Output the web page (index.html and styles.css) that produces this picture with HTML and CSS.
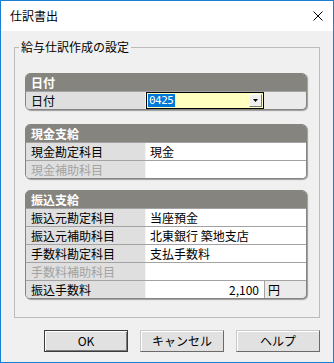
FILE: index.html
```html
<!DOCTYPE html>
<html>
<head>
  <title>仕訳書出</title>
  <link rel="stylesheet" href="styles.css">
</head>
<body>
  <div class="window">
    <div class="titlebar">
      <span class="title">仕訳書出</span>
      <span class="close">
        <svg width="10" height="10" viewBox="0 0 10 10">
          <path d="M0.5 0.5 L9.5 9.5 M9.5 0.5 L0.5 9.5" stroke="#000" stroke-width="1" fill="none"/>
        </svg>
      </span>
    </div>

    <div class="content">
      <fieldset class="group">
        <legend>給与仕訳作成の設定</legend>
        <div class="group-body">

          <div class="panel">
            <div class="panel-head">日付</div>
            <div class="row">
              <div class="label">日付</div>
              <div class="date-field">
                <span class="sel">0425</span>
                <span class="drop">
                  <svg width="5" height="3" viewBox="0 0 5 3"><path d="M0 0 H5 L2.5 3 Z" fill="#000"/></svg>
                </span>
              </div>
              <div class="rest"></div>
            </div>
          </div>

          <div class="panel panel-cash">
            <div class="panel-head">現金支給</div>
            <div class="row">
              <div class="label">現金勘定科目</div>
              <div class="value">現金</div>
            </div>
            <div class="row">
              <div class="label disabled">現金補助科目</div>
              <div class="value"></div>
            </div>
          </div>

          <div class="panel panel-bank">
            <div class="panel-head">振込支給</div>
            <div class="row">
              <div class="label">振込元勘定科目</div>
              <div class="value">当座預金</div>
            </div>
            <div class="row">
              <div class="label">振込元補助科目</div>
              <div class="value">北東銀行 築地支店</div>
            </div>
            <div class="row">
              <div class="label">手数料勘定科目</div>
              <div class="value">支払手数料</div>
            </div>
            <div class="row">
              <div class="label disabled">手数料補助科目</div>
              <div class="value"></div>
            </div>
            <div class="row">
              <div class="label">振込手数料</div>
              <div class="amount">2,100</div>
              <div class="unit">円</div>
            </div>
          </div>

        </div>
      </fieldset>

      <div class="buttons">
        <button type="button" class="btn btn-default">OK</button>
        <button type="button" class="btn">キャンセル</button>
        <button type="button" class="btn">ヘルプ</button>
      </div>
    </div>
  </div>
</body>
</html>
```

FILE: styles.css
```css
* {
  box-sizing: border-box;
}

body {
  margin: 0;
  font-family: "Noto Sans CJK JP", sans-serif;
  font-size: 12px;
  color: #000;
  background-color: #f0f0f0;
}

.window {
  width: 334px;
  height: 363px;
  border: 1px solid #1a7fd4;
  background-color: #f0f0f0;
}

.titlebar {
  display: flex;
  align-items: center;
  height: 30px;
  padding-left: 9px;
  background-color: #fff;
}

.title {
  font-size: 12px;
  line-height: 14px;
}

.close {
  display: flex;
  margin-left: auto;
  margin-right: 10px;
}

.content {
  padding: 8px 13px 0 13px;
}

.group {
  margin: 0;
  padding: 0 12px 18px 4px;
  border: 1px solid #bcbcbc;
}

.group legend {
  padding: 0 2px;
  line-height: 16px;
}

.group-body {
  padding: 18px 0 0 6px;
}

.panel {
  border: 1px solid #85847f;
  border-radius: 5px;
  overflow: hidden;
  background-color: #ebebeb;
  box-shadow: 1px 1px 1px #9c9c9c;
}

.panel-cash {
  margin-top: 14px;
}

.panel-bank {
  margin-top: 11px;
}

.panel-head {
  height: 17px;
  padding-left: 5px;
  line-height: 17px;
  font-weight: bold;
  color: #fff;
  background-color: #85847f;
}

.row {
  display: flex;
  height: 18px;
  border-top: 1px solid #a3a3a3;
  line-height: 17px;
}

.label {
  width: 120px;
  padding-left: 5px;
  background-color: #dfdfdf;
  border-right: 1px solid #f4f4f4;
}

.label.disabled {
  color: #a3a3a3;
}

.value {
  flex: 1;
  padding-left: 4px;
  background-color: #fff;
}

.date-field {
  display: flex;
  align-items: center;
  width: 118px;
  height: 17px;
  padding: 0 1px;
  border: 1px solid #000;
  background-color: #ffffc0;
}

.sel {
  padding: 0 1px;
  font-family: "DejaVu Sans Mono", monospace;
  font-size: 11px;
  line-height: 13px;
  letter-spacing: -0.5px;
  color: #fff;
  background-color: #0078d7;
}

.drop {
  display: flex;
  align-items: center;
  justify-content: center;
  width: 13px;
  height: 13px;
  margin-left: auto;
  border: 1px solid;
  border-color: #fff #7a7a7a #7a7a7a #fff;
  background-color: #f0f0f0;
}

.rest {
  flex: 1;
}

.amount {
  width: 118px;
  padding-right: 5px;
  text-align: right;
  background-color: #fff;
}

.unit {
  flex: 1;
  padding-left: 3px;
  border-left: 1px solid #a3a3a3;
}

.buttons {
  display: flex;
  justify-content: flex-end;
  gap: 12px;
  margin-top: 12px;
}

.btn {
  width: 84px;
  height: 22px;
  padding: 0;
  font-family: "Noto Sans CJK JP", sans-serif;
  font-size: 12px;
  line-height: 18px;
  color: #000;
  background-color: #e1e1e1;
  border: 1px solid;
  border-color: #c8c8c8 #6a6a6a #6a6a6a #c8c8c8;
  box-shadow: inset 1px 1px 0 #fff;
}

.btn-default {
  border-color: #3c3c3c;
  box-shadow: inset 1px 1px 0 #fff, inset -1px -1px 0 #7a7a7a;
}
```
